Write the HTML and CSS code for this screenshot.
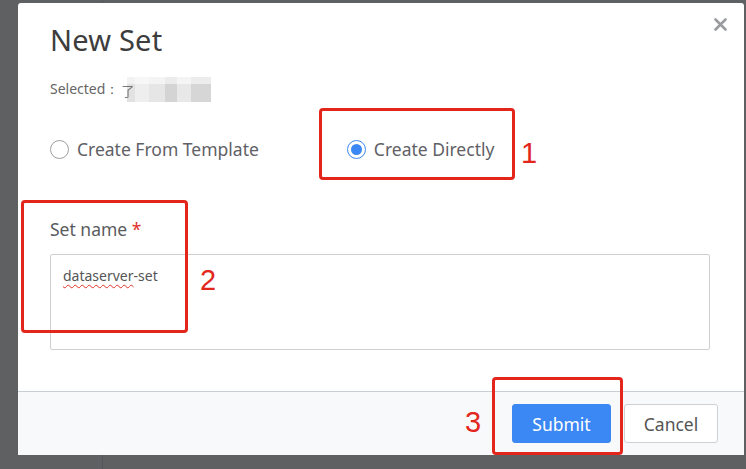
FILE: index.html
```html
<!DOCTYPE html>
<html>
<head>
<meta charset="utf-8">
<link rel="stylesheet" href="styles.css">
</head>
<body>
<div class="modal">
  <button class="close" aria-label="close">
    <svg width="13" height="13" viewBox="0 0 13 13"><path d="M1.5 1.5 L11.5 11.5 M11.5 1.5 L1.5 11.5" stroke="#9a9ca0" stroke-width="2.6" stroke-linecap="round"/></svg>
  </button>
  <div class="body">
    <h1 class="title">New Set</h1>
    <div class="selected">Selected：<span class="blur"><span class="ch">了</span></span></div>
    <div class="radios">
      <label class="radio"><span class="dot"></span>Create From Template</label>
      <label class="radio checked"><span class="dot"></span>Create Directly</label>
    </div>
    <div class="field">
      <div class="label">Set name <span class="req">*</span></div>
      <div class="textarea"><span class="typo">dataserver</span>-set</div>
    </div>
  </div>
  <div class="footer">
    <button class="btn primary">Submit</button>
    <button class="btn">Cancel</button>
  </div>

  <div class="mark m1"></div><span class="num n1">1</span>
  <div class="mark m2"></div><span class="num n2">2</span>
  <div class="mark m3"></div><span class="num n3">3</span>
</div>
</body>
</html>
```

FILE: styles.css
```css
* { box-sizing: border-box; }
html, body { margin: 0; padding: 0; }
body {
  width: 746px;
  height: 469px;
  overflow: hidden;
  background:
    linear-gradient(to right, transparent 102px, #555659 102px, #555659 103px, transparent 103px),
    #5f6062;
  font-family: "Noto Sans", "Open Sans", sans-serif;
  padding: 3px 0 0 18px;
}
.modal {
  position: relative;
  width: 726px;
  height: 452px;
  background: #fff;
  border-radius: 3px 3px 0 0;
  display: flex;
  flex-direction: column;
}
.close {
  position: absolute;
  top: 15px;
  right: 17px;
  border: 0;
  background: none;
  padding: 0;
  width: 13px;
  height: 13px;
  line-height: 0;
}
.body {
  flex: 1;
  padding: 0 33px 0 32px;
  border-bottom: 1px solid #c9ced4;
}
.title {
  margin: 17px 0 0;
  font-size: 29px;
  font-weight: 400;
  line-height: 40px;
  color: #3d3d3d;
  letter-spacing: 0.2px;
}
.selected {
  margin-top: 17px;
  font-size: 14px;
  color: #666;
  line-height: 24px;
  height: 24px;
  display: flex;
  align-items: center;
}
.blur {
  display: inline-block;
  width: 90px;
  height: 25px;
  margin-left: 2px;
  background:
    linear-gradient(to bottom, rgba(255,255,255,0.55) 0 7px, transparent 7px),
    linear-gradient(to right, #fff 0 6px, #e2e2e2 6px 14px, #eeeeee 14px 28px, #e6e6e6 28px 44px, #d4d4d4 44px 56px, #e8e8e8 56px 70px, #d6d6d6 70px 90px);
  position: relative;
}
.blur .ch {
  font-family: "Noto Sans CJK SC", sans-serif;
  font-size: 13px;
  color: #777;
  position: absolute;
  left: 0;
  top: 2px;
  filter: blur(0.4px);
}
.radios {
  margin-top: 36px;
  display: flex;
  align-items: center;
  height: 24px;
}
.radio {
  display: flex;
  align-items: center;
  font-size: 17.5px;
  color: #5f6166;
  margin-right: 88px;
}
.dot {
  width: 19px;
  height: 19px;
  border: 1px solid #9c9ea2;
  border-radius: 50%;
  margin-right: 8px;
  display: flex;
  align-items: center;
  justify-content: center;
}
.checked .dot { border-color: #3b87f3; }
.checked .dot::after {
  content: "";
  width: 11px;
  height: 11px;
  border-radius: 50%;
  background: #3b87f3;
}
.field { margin-top: 56px; }
.label {
  font-size: 17.5px;
  color: #5a5c60;
  line-height: 24px;
}
.req { color: #e0322a; }
.textarea {
  margin-top: 13px;
  width: 660px;
  height: 96px;
  border: 1px solid #cfcfcf;
  border-radius: 2px;
  padding: 11px 12px;
  font-size: 14px;
  color: #555;
  line-height: 20px;
}
.typo {
  text-decoration: underline wavy #e0322a;
  text-decoration-thickness: 1px;
  text-underline-offset: 3px;
}
.footer {
  height: 63px;
  background: #f8f9fb;
  display: flex;
  align-items: center;
  justify-content: flex-end;
  gap: 13px;
  padding-right: 26px;
}
.btn {
  height: 39px;
  border: 1px solid #cfd1d4;
  border-radius: 3px;
  background: #fff;
  font-family: inherit;
  font-size: 17.5px;
  color: #555;
  padding: 0;
  width: 94px;
}
.btn.primary {
  width: 99px;
  background: #3b87f3;
  border-color: #3b87f3;
  color: #fff;
}
.mark {
  position: absolute;
  border: 3px solid #e3261c;
  border-radius: 4px;
}
.m1 { left: 301px; top: 105px; width: 196px; height: 72px; }
.m2 { left: 3px; top: 197px; width: 167px; height: 133px; }
.m3 { left: 474px; top: 374px; width: 131px; height: 78px; }
.num {
  position: absolute;
  color: #e3261c;
  font-family: "Liberation Sans", sans-serif;
  font-size: 29px;
  line-height: 30px;
}
.n1 { left: 503px; top: 135px; }
.n2 { left: 182px; top: 262px; }
.n3 { left: 447px; top: 404px; }
```
